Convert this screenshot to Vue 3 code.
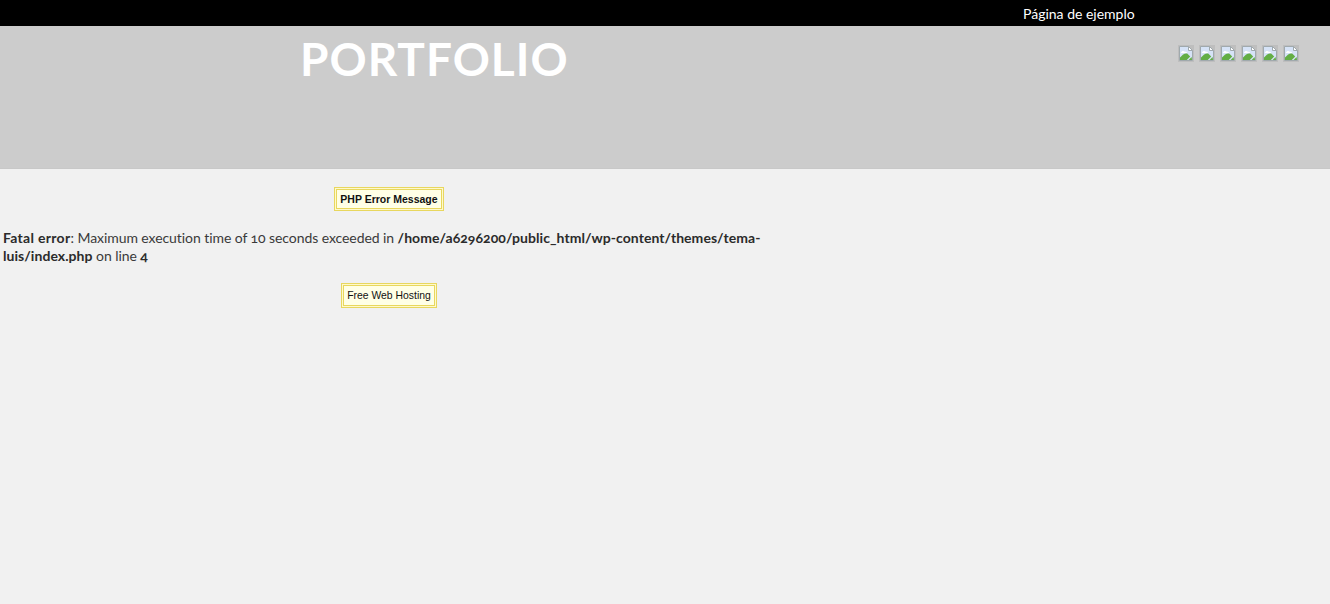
<script setup>
const icons = [1, 2, 3, 4, 5, 6]
</script>

<template>
  <div class="page">
    <nav class="topbar"><a class="toplink">Página de ejemplo</a></nav>
    <header class="banner">
      <h1 class="title">PORTFOLIO</h1>
      <div class="icons">
        <svg v-for="i in icons" :key="i" class="broken" width="16" height="17" viewBox="0 0 16 17">
          <rect x="0" y="0" width="16" height="17" fill="#bebebe" />
          <path d="M1.5 1.5H10.5L14.5 5.5V15.5H1.5Z" fill="#d6e3f7" stroke="#a0a9ad" stroke-width="1" />
          <path d="M10.5 1.5V5.5H14.5Z" fill="#ffffff" stroke="#a0a9ad" stroke-width="1" />
          <path d="M3 7.5C3.6 5.6 6 5.4 6.8 6.8C7.9 6.4 9 7 9 8H3Z" fill="#ffffff" />
          <path d="M2 15V12.5C4.5 9.5 7 7.8 9.2 8.6L12.2 11.6L8.8 15Z" fill="#63ae45" />
          <path d="M10.6 15L13.6 12L14 15Z" fill="#63ae45" />
        </svg>
      </div>
    </header>
    <main class="content">
      <div class="notice-row"><span class="notice strong">PHP Error Message</span></div>
      <p class="error"><b class="lead">Fatal error</b>: Maximum execution time of 10 seconds exceeded in <b>/home/a6296200/public_html/wp-content/themes/tema-luis/index.php</b> on line <b>4</b></p>
      <div class="notice-row"><span class="notice plain">Free Web Hosting</span></div>
    </main>
  </div>
</template>

<style>
html, body { margin: 0; background: #f1f1f1; }
</style>

<style scoped>
.page {
  min-height: 604px;
  background: #f1f1f1;
  font-family: Lato, "Open Sans", sans-serif;
  color: #3a3a3a;
  overflow: hidden;
}
.topbar {
  height: 26px;
  background: #000;
  display: flex;
  align-items: center;
  padding-left: 1023px;
}
.toplink {
  color: #fff;
  font-size: 14px;
  white-space: nowrap;
}
.banner {
  height: 143px;
  box-sizing: border-box;
  background: #cccccc;
  border-bottom: 1px solid #c8c8c8;
  display: flex;
  justify-content: space-between;
  align-items: flex-start;
  padding: 0 31px 0 300px;
}
.title {
  margin: 7px 0 0;
  color: #fff;
  font-size: 46px;
  line-height: 52px;
  font-weight: 700;
  letter-spacing: 1px;
}
.icons {
  display: flex;
  gap: 5px;
  padding-top: 19px;
}
.broken { display: block; }
.content { width: 778px; }
.notice-row {
  display: flex;
  justify-content: center;
  margin-top: 20px;
}
.notice {
  display: block;
  font-family: "Liberation Sans", Arial, sans-serif;
  line-height: 15px;
  color: #111;
  background: #ffffe6;
  border: 1px solid #e8d75e;
  box-shadow: 0 0 0 1px #fff9cc, 0 0 0 2px #e8d75e;
}
.strong {
  font-weight: 700;
  font-size: 10.5px;
  padding: 2px 3px 1px;
}
.plain {
  font-size: 10.4px;
  padding: 2px 3px;
}
.error {
  margin: 20px 0 0 3px;
  width: 762px;
  font-size: 14px;
  line-height: 18px;
  letter-spacing: -0.07px;
  font-feature-settings: "onum";
}
.error b {
  color: #2b2b2b;
  letter-spacing: 0.05px;
}
.error .lead { letter-spacing: 0.3px; }
</style>
